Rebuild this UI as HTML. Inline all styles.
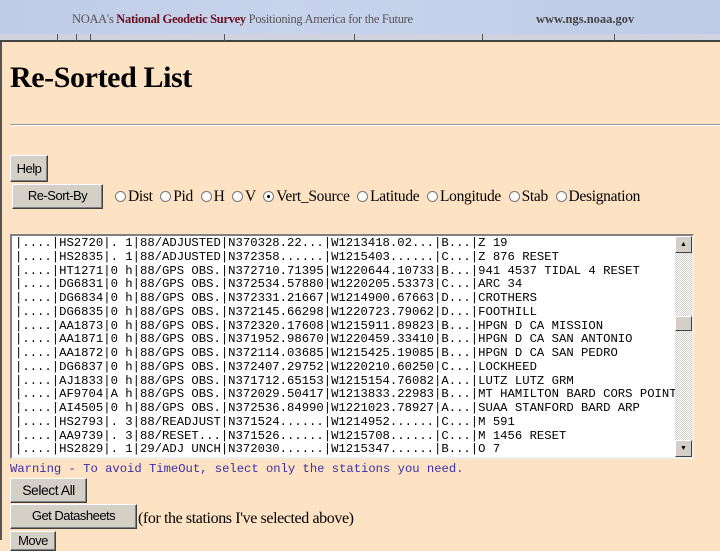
<!DOCTYPE html>
<html><head><style>
*{margin:0;padding:0;box-sizing:border-box}
body{width:720px;height:540px;overflow:hidden;background:#fde3c3;position:relative;font-family:"Liberation Serif",serif}
.hdr{position:absolute;left:0;top:0;width:720px;height:40px;background:linear-gradient(90deg,#c0cce6,#c8d3ec 40%,#bfcbe6);}
.hdr .t{position:absolute;left:72px;top:12px;font-size:12.5px;color:#555;letter-spacing:-0.3px}
.hdr .u{position:absolute;left:536px;top:12px;font-size:12.5px;color:#444;font-weight:bold}
.tb{position:absolute;left:0;top:34px;width:720px;height:8px;background:#cfd3e0;border-bottom:2px solid #444}
.tk{position:absolute;top:34px;width:1px;height:7px;background:#555}
.lb{position:absolute;left:0;top:42px;width:2px;height:498px;background:#555}
h1{position:absolute;left:10px;top:61px;font-size:30px;font-weight:bold;letter-spacing:-0.4px}
.hr{position:absolute;left:10px;top:124px;width:710px;height:2px;background:#999;border-bottom:1px solid #fff}
.btn{position:absolute;background:#d4d0c8;border:1px solid;border-color:#fff #404040 #404040 #fff;box-shadow:inset -1px -1px #808080;font-family:"Liberation Sans",sans-serif;font-size:13px;text-align:center;color:#000;letter-spacing:-0.5px}
.radios{position:absolute;left:111px;top:188px;font-size:15.5px;letter-spacing:-0.3px;white-space:nowrap}
.r{display:inline-block;width:11px;height:11px;border-radius:50%;background:#fff;border:1px solid #777;margin:0 2px 0 4px;vertical-align:-1px;position:relative}
.r.on:after{content:"";position:absolute;left:3px;top:3px;width:3px;height:3px;background:#000;border-radius:50%}
.box{position:absolute;left:10px;top:234px;width:684px;height:225px;background:#fff;border:2px solid;border-color:#808080 #eee #eee #808080;overflow:hidden}
pre{position:absolute;left:3px;top:1px;font-family:"Liberation Mono",monospace;font-size:12.25px;line-height:13.75px;color:#000}
.sb{position:absolute;right:0;top:0;width:17px;height:221px;background:repeating-conic-gradient(#d4d0c8 0 25%,#fff 0 50%) 0 0/2px 2px}
.sbb{position:absolute;left:0;width:17px;height:17px;background:#d4d0c8;border:1px solid;border-color:#fff #404040 #404040 #fff;font-size:7px;text-align:center;line-height:15px}
.warn{position:absolute;left:10px;top:462px;font-family:"Liberation Mono",monospace;font-size:12.2px;color:#3a2fa8}
.note{position:absolute;left:138px;top:510px;font-size:16px;letter-spacing:-0.4px}
</style></head><body>
<div class="hdr"><div class="t">NOAA's <b style="color:#6a1020">National Geodetic Survey</b> Positioning America for the Future</div><div class="u">www.ngs.noaa.gov</div></div>
<div class="tb"></div>
<div class="tk" style="left:57px"></div><div class="tk" style="left:76px"></div><div class="tk" style="left:90px"></div><div class="tk" style="left:224px"></div><div class="tk" style="left:354px"></div><div class="tk" style="left:482px"></div><div class="tk" style="left:614px"></div>
<div class="lb"></div>
<h1>Re-Sorted List</h1>
<div class="hr"></div>
<div class="btn" style="left:10px;top:155px;width:38px;height:27px;line-height:25px">Help</div>
<div class="btn" style="left:12px;top:184px;width:91px;height:25px;line-height:22px">Re-Sort-By</div>
<div class="radios"><span class="r"></span>Dist <span class="r"></span>Pid <span class="r"></span>H <span class="r"></span>V <span class="r on"></span>Vert_Source <span class="r"></span>Latitude <span class="r"></span>Longitude <span class="r"></span>Stab <span class="r"></span>Designation</div>
<div class="box"><pre>|....|HS2720|. 1|88/ADJUSTED|N370328.22...|W1213418.02...|B...|Z 19
|....|HS2835|. 1|88/ADJUSTED|N372358......|W1215403......|C...|Z 876 RESET
|....|HT1271|0 h|88/GPS OBS.|N372710.71395|W1220644.10733|B...|941 4537 TIDAL 4 RESET
|....|DG6831|0 h|88/GPS OBS.|N372534.57880|W1220205.53373|C...|ARC 34
|....|DG6834|0 h|88/GPS OBS.|N372331.21667|W1214900.67663|D...|CROTHERS
|....|DG6835|0 h|88/GPS OBS.|N372145.66298|W1220723.79062|D...|FOOTHILL
|....|AA1873|0 h|88/GPS OBS.|N372320.17608|W1215911.89823|B...|HPGN D CA MISSION
|....|AA1871|0 h|88/GPS OBS.|N371952.98670|W1220459.33410|B...|HPGN D CA SAN ANTONIO
|....|AA1872|0 h|88/GPS OBS.|N372114.03685|W1215425.19085|B...|HPGN D CA SAN PEDRO
|....|DG6837|0 h|88/GPS OBS.|N372407.29752|W1220210.60250|C...|LOCKHEED
|....|AJ1833|0 h|88/GPS OBS.|N371712.65153|W1215154.76082|A...|LUTZ LUTZ GRM
|....|AF9704|A h|88/GPS OBS.|N372029.50417|W1213833.22983|B...|MT HAMILTON BARD CORS POINT
|....|AI4505|0 h|88/GPS OBS.|N372536.84990|W1221023.78927|A...|SUAA STANFORD BARD ARP
|....|HS2793|. 3|88/READJUST|N371524......|W1214952......|C...|M 591
|....|AA9739|. 3|88/RESET...|N371526......|W1215708......|C...|M 1456 RESET
|....|HS2829|. 1|29/ADJ UNCH|N372030......|W1215347......|B...|O 7</pre>
<div class="sb"><div class="sbb" style="top:0">▲</div><div class="sbb" style="top:80px;height:15px"></div><div class="sbb" style="top:204px">▼</div></div></div>
<div class="warn">Warning - To avoid TimeOut, select only the stations you need.</div>
<div class="btn" style="left:10px;top:478px;width:77px;height:25px;line-height:23px;font-size:14px">Select All</div>
<div class="btn" style="left:10px;top:504px;width:127px;height:25px;line-height:22px">Get Datasheets</div>
<div class="note">(for the stations I've selected above)</div>
<div class="btn" style="left:10px;top:531px;width:46px;height:20px;line-height:18px">Move</div>
</body></html>
